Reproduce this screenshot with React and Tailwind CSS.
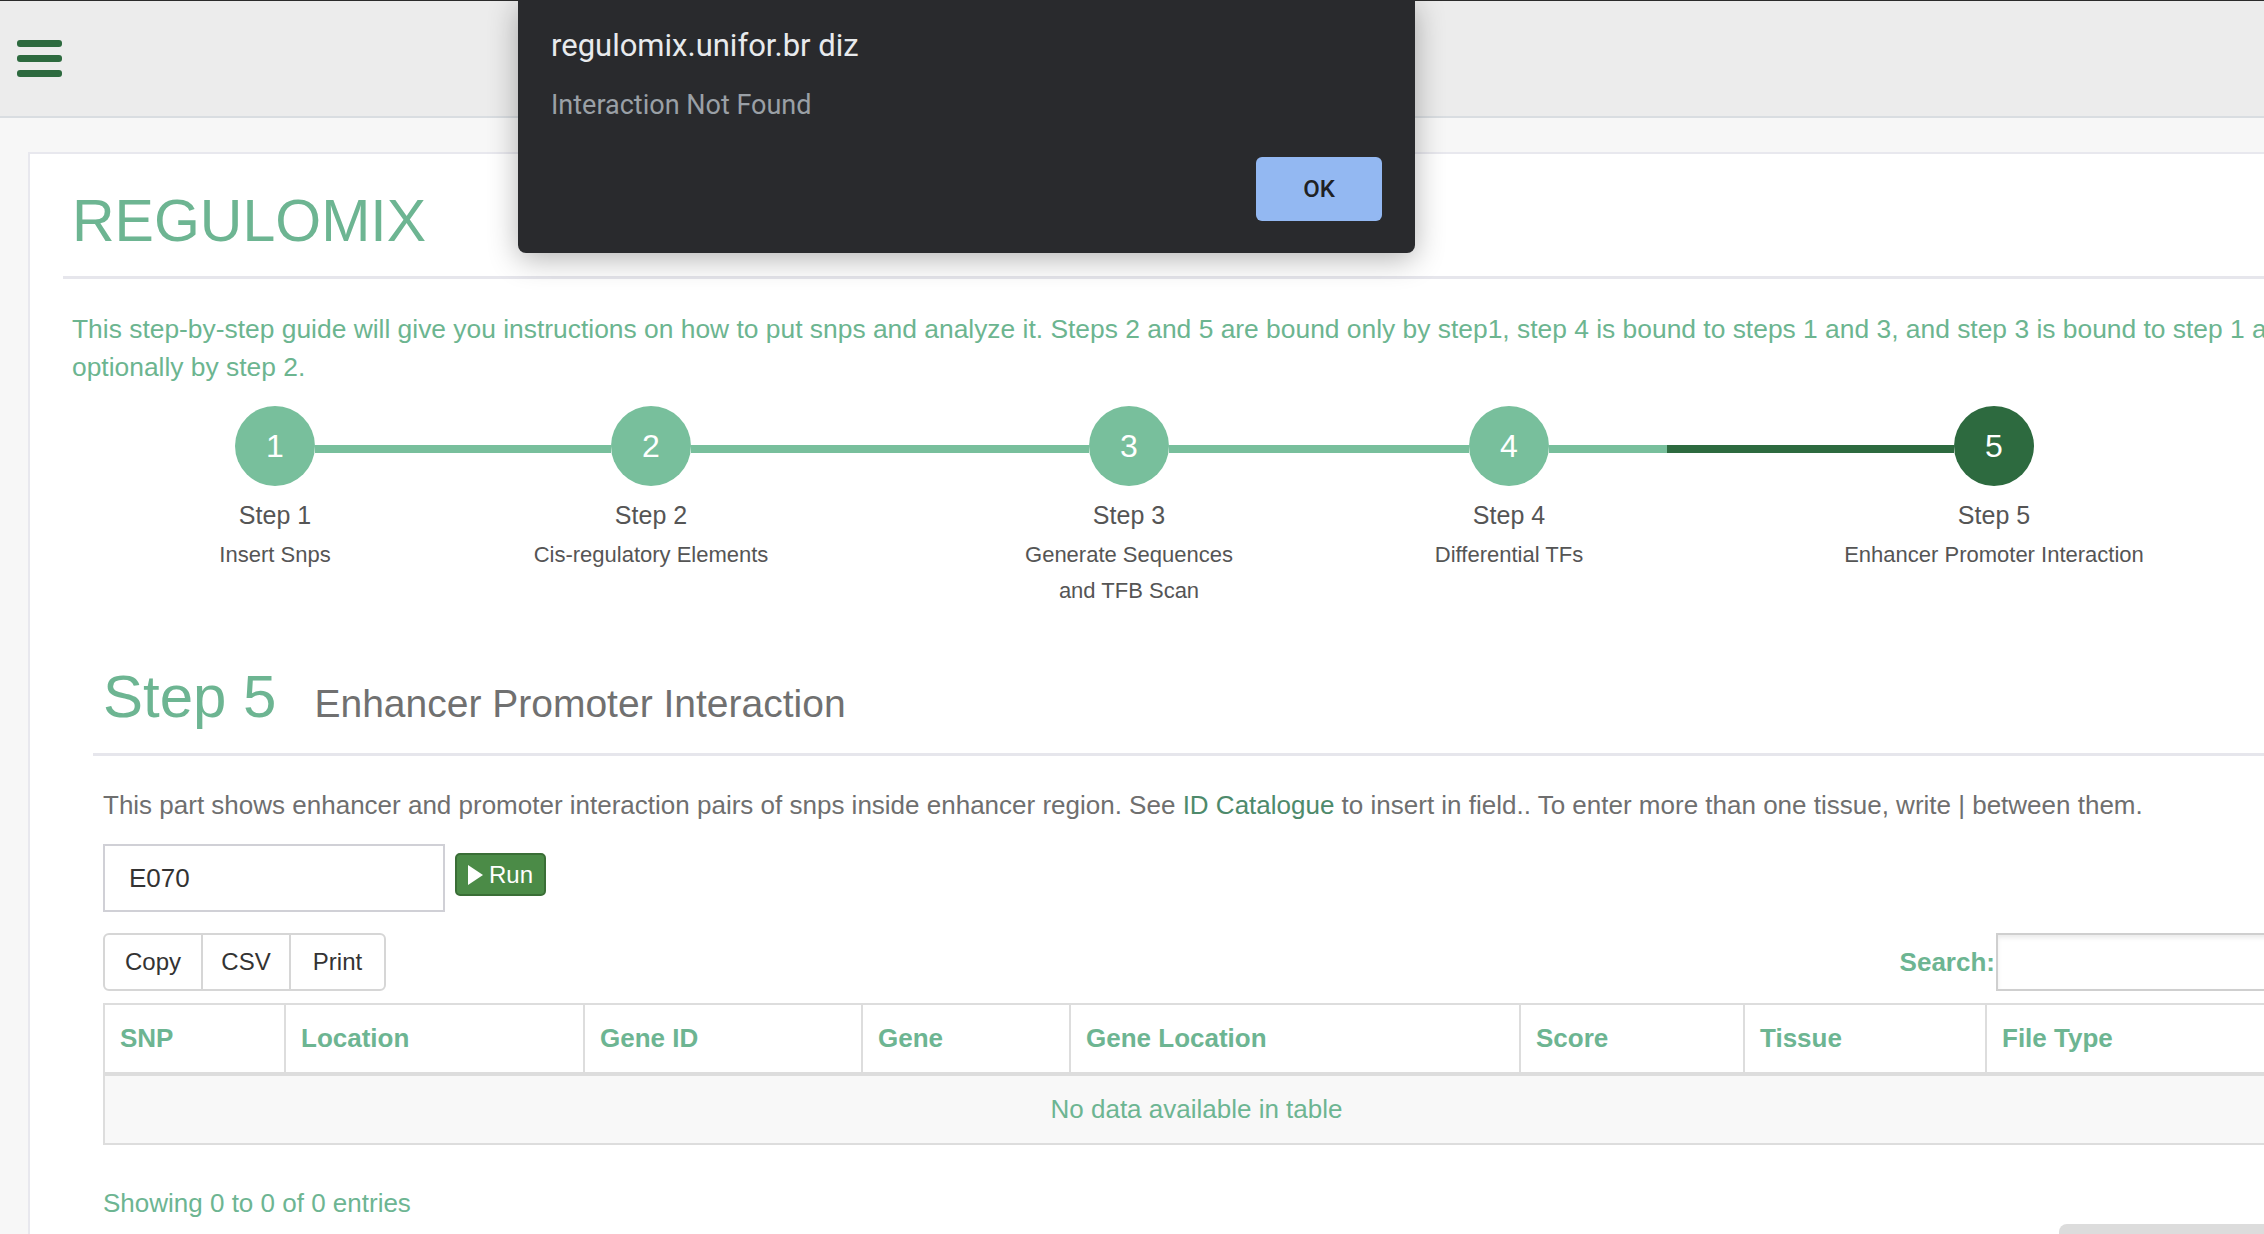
import React from "react";

const LIGHT = "bg-[#78bf9c]";

function Step({ n, title, label, width, left, right, dark, leftDark }) {
  return (
    <div className={`flex flex-col items-center shrink-0 ${width}`}>
      <div className="flex w-full items-start h-[80px]">
        <div
          className={`flex-1 h-[8px] mt-[39px] ${
            left ? (leftDark ? "bg-[#2d6a3f]" : LIGHT) : "bg-transparent"
          }`}
        />
        <div
          className={`w-[80px] h-[80px] rounded-full flex items-center justify-center text-white text-[32px] ${
            dark ? "bg-[#2d6a3f]" : LIGHT
          }`}
        >
          {n}
        </div>
        <div className={`flex-1 h-[8px] mt-[39px] ${right ? LIGHT : "bg-transparent"}`} />
      </div>
      <div className="mt-[14px] text-[25px] leading-[30px] text-[#555]">{title}</div>
      <div className="mt-[7px] text-[22px] leading-[36px] text-[#555] text-center">{label}</div>
    </div>
  );
}

export default function App() {
  return (
    <div className="relative w-[2264px] h-[1234px] overflow-hidden bg-[#f7f7f7] font-['Liberation_Sans',Arial,sans-serif]">
      {/* top navbar */}
      <header className="h-[118px] bg-[#ececec] border-t border-t-[#2b2b2b] border-b-2 border-b-[#d9dde1] pl-[17px] pt-[39px]">
        <div className="flex flex-col gap-[8px] w-[45px]">
          <div className="h-[7px] rounded-[3px] bg-[#2d6a3f]" />
          <div className="h-[7px] rounded-[3px] bg-[#2d6a3f]" />
          <div className="h-[7px] rounded-[3px] bg-[#2d6a3f]" />
        </div>
      </header>

      <main className="pl-[28px] pt-[34px]">
        <div className="w-[2400px] bg-white border-l-2 border-t-2 border-[#e8e8ee] pl-[33px] pb-[200px]">
          {/* title */}
          <div className="pt-[38px] pl-[9px] text-[59px] leading-none text-[#6db592]">REGULOMIX</div>
          <div className="mt-[25px] h-[3px] bg-[#e6e6ec]" />

          {/* intro */}
          <div className="pl-[9px] mt-[31px] text-[26.4px] leading-[38px] text-[#6cb590] whitespace-nowrap">
            This step-by-step guide will give you instructions on how to put snps and analyze it. Steps 2 and 5 are bound only by step1, step 4 is bound to steps 1 and 3, and step 3 is bound to step 1 and
            <br />
            optionally by step 2.
          </div>

          {/* stepper */}
          <div className="flex ml-[92px] mt-[20px]">
            <Step n="1" title="Step 1" label="Insert Snps" width="w-[240px]" right />
            <Step n="2" title="Step 2" label="Cis-regulatory Elements" width="w-[512px]" left right />
            <Step
              n="3"
              title="Step 3"
              label={
                <>
                  Generate Sequences
                  <br />
                  and TFB Scan
                </>
              }
              width="w-[444px]"
              left
              right
            />
            <Step n="4" title="Step 4" label="Differential TFs" width="w-[316px]" left right />
            <Step n="5" title="Step 5" label="Enhancer Promoter Interaction" width="w-[654px]" left leftDark dark />
          </div>

          {/* step 5 section */}
          <div className="ml-[30px] mt-[58px]">
            <div className="pl-[10px] text-[60px] leading-none text-[#6db592] whitespace-nowrap">
              Step 5
              <span className="ml-[38px] text-[39px] leading-none text-[#707070]">Enhancer Promoter Interaction</span>
            </div>
            <div className="mt-[26px] h-[3px] bg-[#e6e6ec]" />

            <div className="pl-[10px]">
              <p className="mt-[31px] text-[26px] leading-[36px] text-[#6f6f6f] whitespace-nowrap">
                This part shows enhancer and promoter interaction pairs of snps inside enhancer region. See{" "}
                <span className="text-[#4e8a6b]">ID Catalogue</span> to insert in field.. To enter more than one tissue, write | between them.
              </p>

              <div className="mt-[21px] flex items-start gap-[10px]">
                <div className="w-[342px] h-[68px] border-2 border-[#d0d0d6] flex items-center pl-[24px] text-[26px] text-[#333]">
                  E070
                </div>
                <button className="mt-[9px] h-[43px] w-[91px] rounded-[5px] bg-[#4b8b47] border-2 border-[#3a6e36] flex items-center justify-center gap-[6px] text-white text-[24px]">
                  <svg width="15" height="20" viewBox="0 0 15 20">
                    <path d="M0 0 L15 10 L0 20 Z" fill="white" />
                  </svg>
                  Run
                </button>
              </div>

              <div className="mt-[21px] w-[2187px] flex justify-between items-start">
                <div className="flex h-[58px] border-2 border-[#d6d6d6] rounded-[6px] text-[24px] text-[#333]">
                  <div className="w-[98px] flex items-center justify-center border-r-2 border-[#d6d6d6]">Copy</div>
                  <div className="w-[88px] flex items-center justify-center border-r-2 border-[#d6d6d6]">CSV</div>
                  <div className="w-[93px] flex items-center justify-center">Print</div>
                </div>
                <div className="flex items-center h-[58px]">
                  <span className="text-[26px] font-bold text-[#6db592]">Search:</span>
                  <div className="ml-[1px] w-[294px] h-[58px] border-2 border-[#cfcfcf] shadow-[inset_0_3px_4px_rgba(0,0,0,0.08)]" />
                </div>
              </div>

              <table className="mt-[12px] w-[2187px] border-collapse table-fixed text-[26px]">
                <colgroup>
                  <col className="w-[181px]" />
                  <col className="w-[299px]" />
                  <col className="w-[278px]" />
                  <col className="w-[208px]" />
                  <col className="w-[450px]" />
                  <col className="w-[224px]" />
                  <col className="w-[242px]" />
                  <col />
                </colgroup>
                <thead>
                  <tr className="h-[70px]">
                    {["SNP", "Location", "Gene ID", "Gene", "Gene Location", "Score", "Tissue", "File Type"].map((h) => (
                      <th
                        key={h}
                        className="border-2 border-b-[4px] border-[#dddddd] text-left pl-[15px] font-bold text-[#6db592]"
                      >
                        {h}
                      </th>
                    ))}
                  </tr>
                </thead>
                <tbody>
                  <tr className="h-[70px] bg-[#f8f8f8]">
                    <td colSpan={8} className="border-2 border-[#dddddd] text-center text-[26px] text-[#6db592]">
                      No data available in table
                    </td>
                  </tr>
                </tbody>
              </table>

              <div className="w-[2187px] flex justify-between items-start">
                <div className="mt-[40px] text-[26px] leading-[36px] text-[#6db592]">Showing 0 to 0 of 0 entries</div>
                <div className="mt-[79px] w-[231px] h-[40px] rounded-tl-[8px] bg-[#dcdcdc]" />
              </div>
            </div>
          </div>
        </div>
      </main>

      {/* alert dialog */}
      <div className="absolute left-[518px] top-0 w-[897px] h-[253px] bg-[#292a2d] rounded-b-[8px] shadow-[0_6px_30px_rgba(0,0,0,0.3)] font-['Roboto',Arial,sans-serif]">
        <div className="absolute left-[33px] top-[28px] text-[31px] leading-[36px] text-[#e8eaed]">regulomix.unifor.br diz</div>
        <div className="absolute left-[33px] top-[89px] text-[27px] leading-[32px] text-[#9aa0a6]">Interaction Not Found</div>
        <button className="absolute right-[33px] bottom-[32px] w-[126px] h-[64px] rounded-[6px] bg-[#93b8f2] text-[#202124] text-[24px] font-medium">
          OK
        </button>
      </div>
    </div>
  );
}
